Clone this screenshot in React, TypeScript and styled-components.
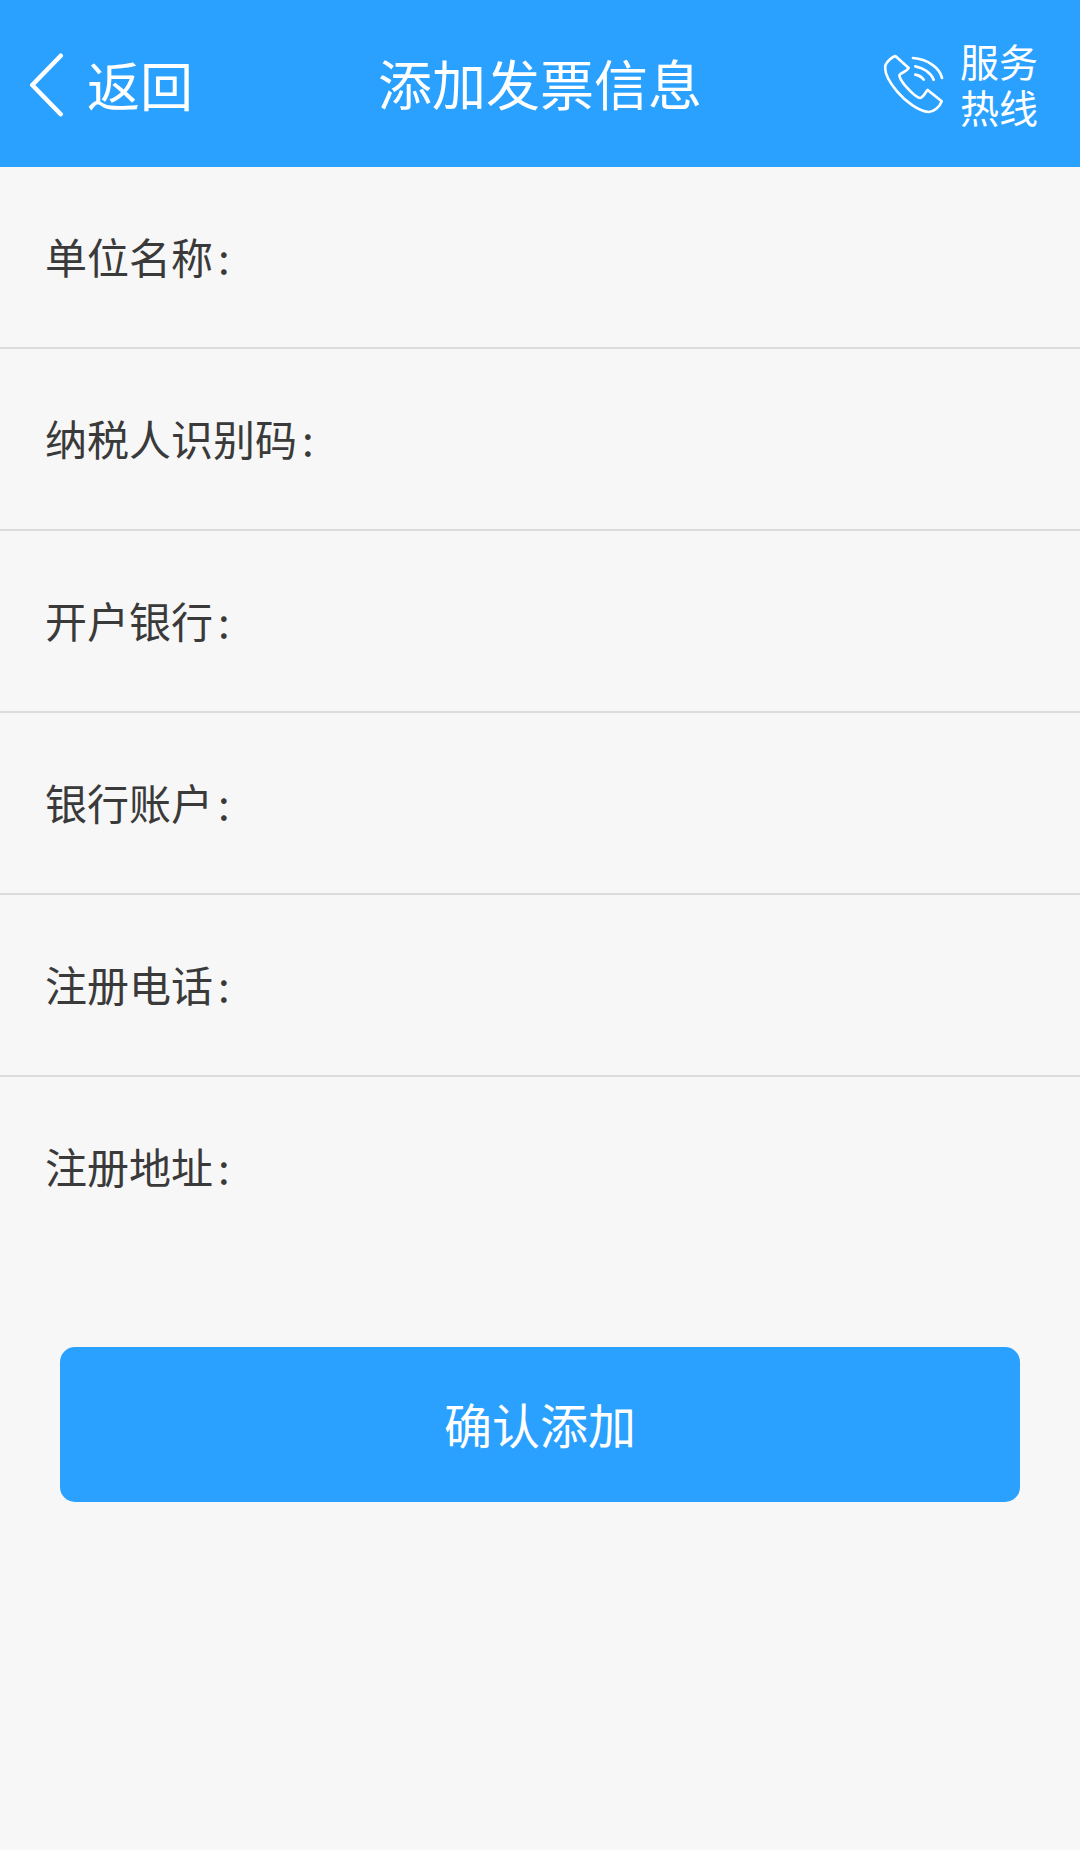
import styled, { createGlobalStyle } from 'styled-components';

const GlobalStyle = createGlobalStyle`
  html, body {
    margin: 0;
    padding: 0;
    background: #f7f7f7;
  }
  body {
    font-family: "Noto Sans CJK SC", "Liberation Sans", sans-serif;
  }
`;

const Page = styled.div`
  width: 1080px;
  height: 1850px;
  background: #f7f7f7;
  display: flex;
  flex-direction: column;
`;

const Header = styled.header`
  height: 167px;
  background: #2aa1ff;
  color: #fff;
  display: grid;
  grid-template-columns: 1fr auto 1fr;
  align-items: center;
  flex-shrink: 0;
`;

const BackLink = styled.div`
  display: flex;
  align-items: center;
  padding-left: 30px;
  gap: 21px;
  font-size: 53px;
  line-height: 60px;
`;

const Title = styled.h1`
  margin: 0;
  font-size: 54px;
  font-weight: 400;
  line-height: 1;
  padding-bottom: 1px;
`;

const Hotline = styled.div`
  display: flex;
  align-items: center;
  justify-content: flex-end;
  padding-right: 42px;
  gap: 16px;
`;

const HotlineText = styled.div`
  font-size: 39px;
  line-height: 46px;
  width: 78px;
  padding-bottom: 2px;
`;

const Form = styled.div`
  display: flex;
  flex-direction: column;
`;

const Row = styled.div`
  height: 180px;
  display: flex;
  align-items: center;
  padding-left: 45px;
  border-bottom: 2px solid #dcdcdc;
  font-size: 42px;
  color: #3a3a3a;
  span {
    margin-left: 5px;
  }
  &:last-child {
    border-bottom: 0;
  }
`;

const RowLabel = styled.div`
  margin-top: -3px;
`;

const Submit = styled.button`
  display: block;
  margin: 90px 60px 0;
  width: 960px;
  height: 155px;
  border: 0;
  border-radius: 15px;
  background: #2aa1ff;
  color: #fff;
  font-family: inherit;
  font-size: 48px;
  padding: 0 0 3px;
`;

const labels = ['单位名称', '纳税人识别码', '开户银行', '银行账户', '注册电话', '注册地址'];

const BackIcon = () => (
  <svg width="36" height="66" viewBox="0 0 36 66" fill="none" stroke="#fff" strokeWidth="4.5" strokeLinecap="round" strokeLinejoin="round">
    <path d="M30.75 4.75 L2.25 34 L30.75 63.25" />
  </svg>
);

const PhoneIcon = () => (
  <svg width="62" height="62" viewBox="125 100 186 186" fill="none" stroke="#fff" strokeWidth="8" strokeLinecap="round" strokeLinejoin="round">
    <path d="M165 109 C155 112 140 125 136 135 C130 155 145 185 170 215 C195 245 235 275 265 277 C280 277 298 262 304 245 L262 211 C255 218 250 232 240 235 C228 235 205 210 192 195 C182 182 175 172 178 165 C185 158 200 155 205 145 Z" />
    <path d="M218 115 C262 118 298 145 305 175" />
    <path d="M225 140 C250 145 272 160 280 180" />
    <path d="M225 165 C235 167 245 172 250 180" />
  </svg>
);

export default function App() {
  return (
    <Page>
      <GlobalStyle />
      <Header>
        <BackLink>
          <BackIcon />
          <span>返回</span>
        </BackLink>
        <Title>添加发票信息</Title>
        <Hotline>
          <PhoneIcon />
          <HotlineText>服务 热线</HotlineText>
        </Hotline>
      </Header>
      <Form>
        {labels.map((label) => (
          <Row key={label}>
            <RowLabel>
              {label}
              <span>:</span>
            </RowLabel>
          </Row>
        ))}
      </Form>
      <Submit>确认添加</Submit>
    </Page>
  );
}
